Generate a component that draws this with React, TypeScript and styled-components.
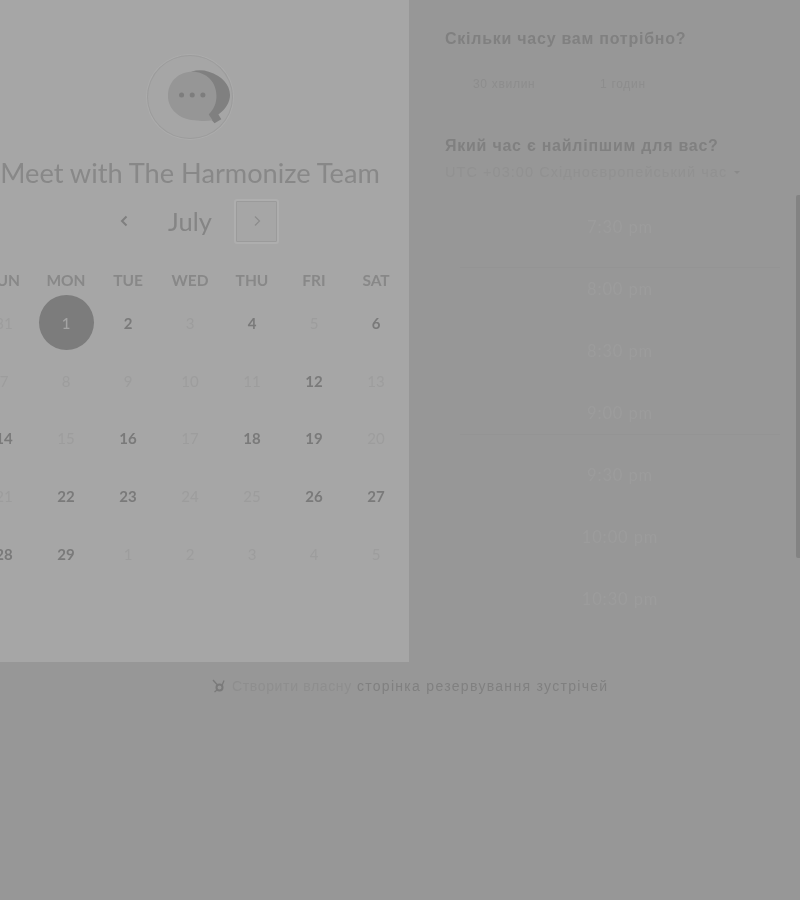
import React from "react";
import styled, { createGlobalStyle } from "styled-components";

const GlobalStyle = createGlobalStyle`
  html, body {
    margin: 0;
    padding: 0;
    background: #979797;
  }
`;

const Page = styled.div`
  position: relative;
  width: 800px;
  height: 900px;
  overflow: hidden;
  background: #979797;
  filter: blur(0.55px);
`;

const Main = styled.div`
  display: flex;
  align-items: flex-start;
`;

const CalendarPanel = styled.section`
  flex: none;
  box-sizing: border-box;
  width: 438px;
  height: 662px;
  margin-left: -29px;
  padding-top: 55px;
  display: flex;
  flex-direction: column;
  align-items: center;
  background: #a6a6a6;
  font-family: Lato, "Noto Sans", sans-serif;
`;

const Avatar = styled.div`
  box-sizing: border-box;
  width: 86px;
  height: 84px;
  padding-left: 18px;
  border: 1px solid #9c9c9c;
  border-radius: 50%;
  box-shadow: 0 0 0 1px #acacac;
  display: flex;
  align-items: center;
  justify-content: center;
`;

const Title = styled.h1`
  margin: 17px 0 0;
  font-size: 27.2px;
  line-height: 34px;
  font-weight: 400;
  color: #888;
  white-space: nowrap;
`;

const MonthBar = styled.div`
  display: flex;
  align-items: center;
  justify-content: center;
  margin-top: 8px;
  height: 46px;
`;

const NavButton = styled.button<{ $outlined?: boolean }>`
  box-sizing: border-box;
  width: 45px;
  height: 45px;
  padding: 0;
  display: flex;
  align-items: center;
  justify-content: center;
  background: transparent;
  color: ${(p) => (p.$outlined ? "#8c8c8c" : "#7f7f7f")};
  border: ${(p) => (p.$outlined ? "2px solid #aeaeae" : "2px solid transparent")};
  border-radius: 3px;
  box-shadow: ${(p) => (p.$outlined ? "inset 0 0 0 1px #9b9b9b" : "none")};
`;

const Month = styled.div`
  width: 88px;
  text-align: center;
  font-size: 25.5px;
  line-height: 46px;
  color: #858585;
`;

const WeekHeader = styled.div`
  display: grid;
  grid-template-columns: repeat(7, 62px);
  margin-top: 22px;
  height: 28px;
`;

const WeekDay = styled.div`
  line-height: 28px;
  text-align: center;
  font-size: 15.5px;
  font-weight: 700;
  color: #888;
`;

const DayGrid = styled.div`
  display: grid;
  grid-template-columns: repeat(7, 62px);
  grid-auto-rows: 57.7px;
`;

const Day = styled.div<{ $active?: boolean }>`
  display: flex;
  align-items: center;
  justify-content: center;
  font-size: 15px;
  font-weight: ${(p) => (p.$active ? 700 : 400)};
  color: ${(p) => (p.$active ? "#7a7a7a" : "#9d9d9d")};
`;

const SelectedDay = styled.div`
  width: 55px;
  height: 55px;
  border-radius: 50%;
  background: #7c7c7c;
  color: #a4a4a4;
  font-size: 15px;
  font-weight: 500;
  display: flex;
  align-items: center;
  justify-content: center;
`;

const SidePanel = styled.section`
  flex: 1;
  box-sizing: border-box;
  padding: 29px 0 0 36px;
  font-family: "Liberation Sans", Roboto, sans-serif;
`;

const Question = styled.h2`
  margin: 0;
  font-size: 16px;
  line-height: 20px;
  font-weight: 700;
  letter-spacing: 0.75px;
  color: #808080;
`;

const DurationRow = styled.div`
  display: flex;
  margin-top: 25px;
  margin-bottom: 42px;
  height: 20px;
  align-items: center;
`;

const Duration = styled.div<{ $width: number }>`
  width: ${(p) => p.$width}px;
  padding-left: 28px;
  box-sizing: border-box;
  font-size: 12px;
  letter-spacing: 0.7px;
  color: #8d8d8d;
`;

const Timezone = styled.div`
  display: flex;
  align-items: center;
  margin-top: 6px;
  height: 20px;
  font-size: 14.5px;
  letter-spacing: 1.05px;
  color: #919191;
  white-space: nowrap;
`;

const Caret = styled.span`
  margin-left: 7px;
  width: 0;
  height: 0;
  border-left: 3px solid transparent;
  border-right: 3px solid transparent;
  border-top: 3px solid #8a8a8a;
`;

const Slots = styled.div`
  margin-top: 23px;
  margin-left: 15px;
  width: 320px;
  display: flex;
  flex-direction: column;
  gap: 18px;
`;

const Slot = styled.div<{ $edge?: "top" | "bottom" }>`
  box-sizing: border-box;
  height: 44px;
  display: flex;
  align-items: center;
  justify-content: center;
  font-family: Lato, "Noto Sans", sans-serif;
  font-size: 16.5px;
  letter-spacing: 0.9px;
  color: #9c9c9c;
  border-top: 1px solid ${(p) => (p.$edge === "top" ? "#949494" : "transparent")};
  border-bottom: 1px solid ${(p) => (p.$edge === "bottom" ? "#949494" : "transparent")};
`;

const Footer = styled.footer`
  display: flex;
  align-items: center;
  margin-top: 14px;
  padding-left: 211px;
  height: 20px;
  font-family: "Liberation Sans", Roboto, sans-serif;
  font-size: 14px;
  white-space: nowrap;
`;

const FooterFaint = styled.span`
  margin-left: 5px;
  letter-spacing: 0.65px;
  color: #8e8e8e;
`;

const FooterLink = styled.span`
  margin-left: 5px;
  letter-spacing: 1.3px;
  color: #808080;
`;

const ScrollThumb = styled.div`
  position: absolute;
  top: 195px;
  right: 0;
  width: 4px;
  height: 363px;
  border-radius: 2px 0 0 2px;
  background: #838383;
`;

const ChatIcon = () => (
  <svg width="63" height="56" viewBox="0 0 65 56">
    <path
      d="M24 2C30 0 36 0 42 2 56 6 64 16 64 26 64 34 59 41 52 46L55 51 48 55 41 47z"
      fill="#808080"
    />
    <path
      d="M25 2C40 2 50 13 50 27 50 35 47 41 42 46L46 52C40 53 35 53 27 52 12 51 0 41 0 27 0 12 11 2 25 2z"
      fill="#969696"
    />
    <circle cx="14" cy="26" r="2.6" fill="#7d7d7d" />
    <circle cx="25" cy="26" r="2.6" fill="#7d7d7d" />
    <circle cx="36" cy="26" r="2.6" fill="#7d7d7d" />
  </svg>
);

const Chevron = ({ left }: { left?: boolean }) => (
  <svg width="10" height="12" viewBox="0 0 10 12" fill="none">
    <path
      d={left ? "M7.5 1.5 3 6l4.5 4.5" : "M3 1.5 7.5 6 3 10.5"}
      stroke="currentColor"
      strokeWidth={left ? 2 : 1.2}
    />
  </svg>
);

const Sprocket = () => (
  <svg width="16" height="16" viewBox="0 0 16 16" fill="none" stroke="#7a7a7a">
    <circle cx="8.5" cy="9.5" r="3" strokeWidth="2" />
    <path d="M6.5 7 2 2M11 7.5 13 2.5M6 12l-2.5 2" strokeWidth="1.3" />
  </svg>
);

const weekDays = ["SUN", "MON", "TUE", "WED", "THU", "FRI", "SAT"];

const days: [string, boolean][] = [
  ["31", false], ["1", true], ["2", true], ["3", false], ["4", true], ["5", false], ["6", true],
  ["7", false], ["8", false], ["9", false], ["10", false], ["11", false], ["12", true], ["13", false],
  ["14", true], ["15", false], ["16", true], ["17", false], ["18", true], ["19", true], ["20", false],
  ["21", false], ["22", true], ["23", true], ["24", false], ["25", false], ["26", true], ["27", true],
  ["28", true], ["29", true], ["1", false], ["2", false], ["3", false], ["4", false], ["5", false],
];

const slots = ["7:30 pm", "8:00 pm", "8:30 pm", "9:00 pm", "9:30 pm", "10:00 pm", "10:30 pm"];

export default function App() {
  return (
    <Page>
      <GlobalStyle />
      <Main>
        <CalendarPanel>
          <Avatar>
            <ChatIcon />
          </Avatar>
          <Title>Meet with The Harmonize Team</Title>
          <MonthBar>
            <NavButton>
              <Chevron left />
            </NavButton>
            <Month>July</Month>
            <NavButton $outlined>
              <Chevron />
            </NavButton>
          </MonthBar>
          <WeekHeader>
            {weekDays.map((d) => (
              <WeekDay key={d}>{d}</WeekDay>
            ))}
          </WeekHeader>
          <DayGrid>
            {days.map(([label, active], i) => (
              <Day key={i} $active={active}>
                {i === 1 ? <SelectedDay>{label}</SelectedDay> : label}
              </Day>
            ))}
          </DayGrid>
        </CalendarPanel>
        <SidePanel>
          <Question>Скільки часу вам потрібно?</Question>
          <DurationRow>
            <Duration $width={127}>30 хвилин</Duration>
            <Duration $width={120}>1 годин</Duration>
          </DurationRow>
          <Question>Який час є найліпшим для вас?</Question>
          <Timezone>
            UTC +03:00 Східноєвропейський час
            <Caret />
          </Timezone>
          <Slots>
            {slots.map((s, i) => (
              <Slot key={s} $edge={i === 1 ? "top" : i === 3 ? "bottom" : undefined}>
                {s}
              </Slot>
            ))}
          </Slots>
        </SidePanel>
      </Main>
      <Footer>
        <Sprocket />
        <FooterFaint>Створити власну</FooterFaint>
        <FooterLink>сторінка резервування зустрічей</FooterLink>
      </Footer>
      <ScrollThumb />
    </Page>
  );
}
